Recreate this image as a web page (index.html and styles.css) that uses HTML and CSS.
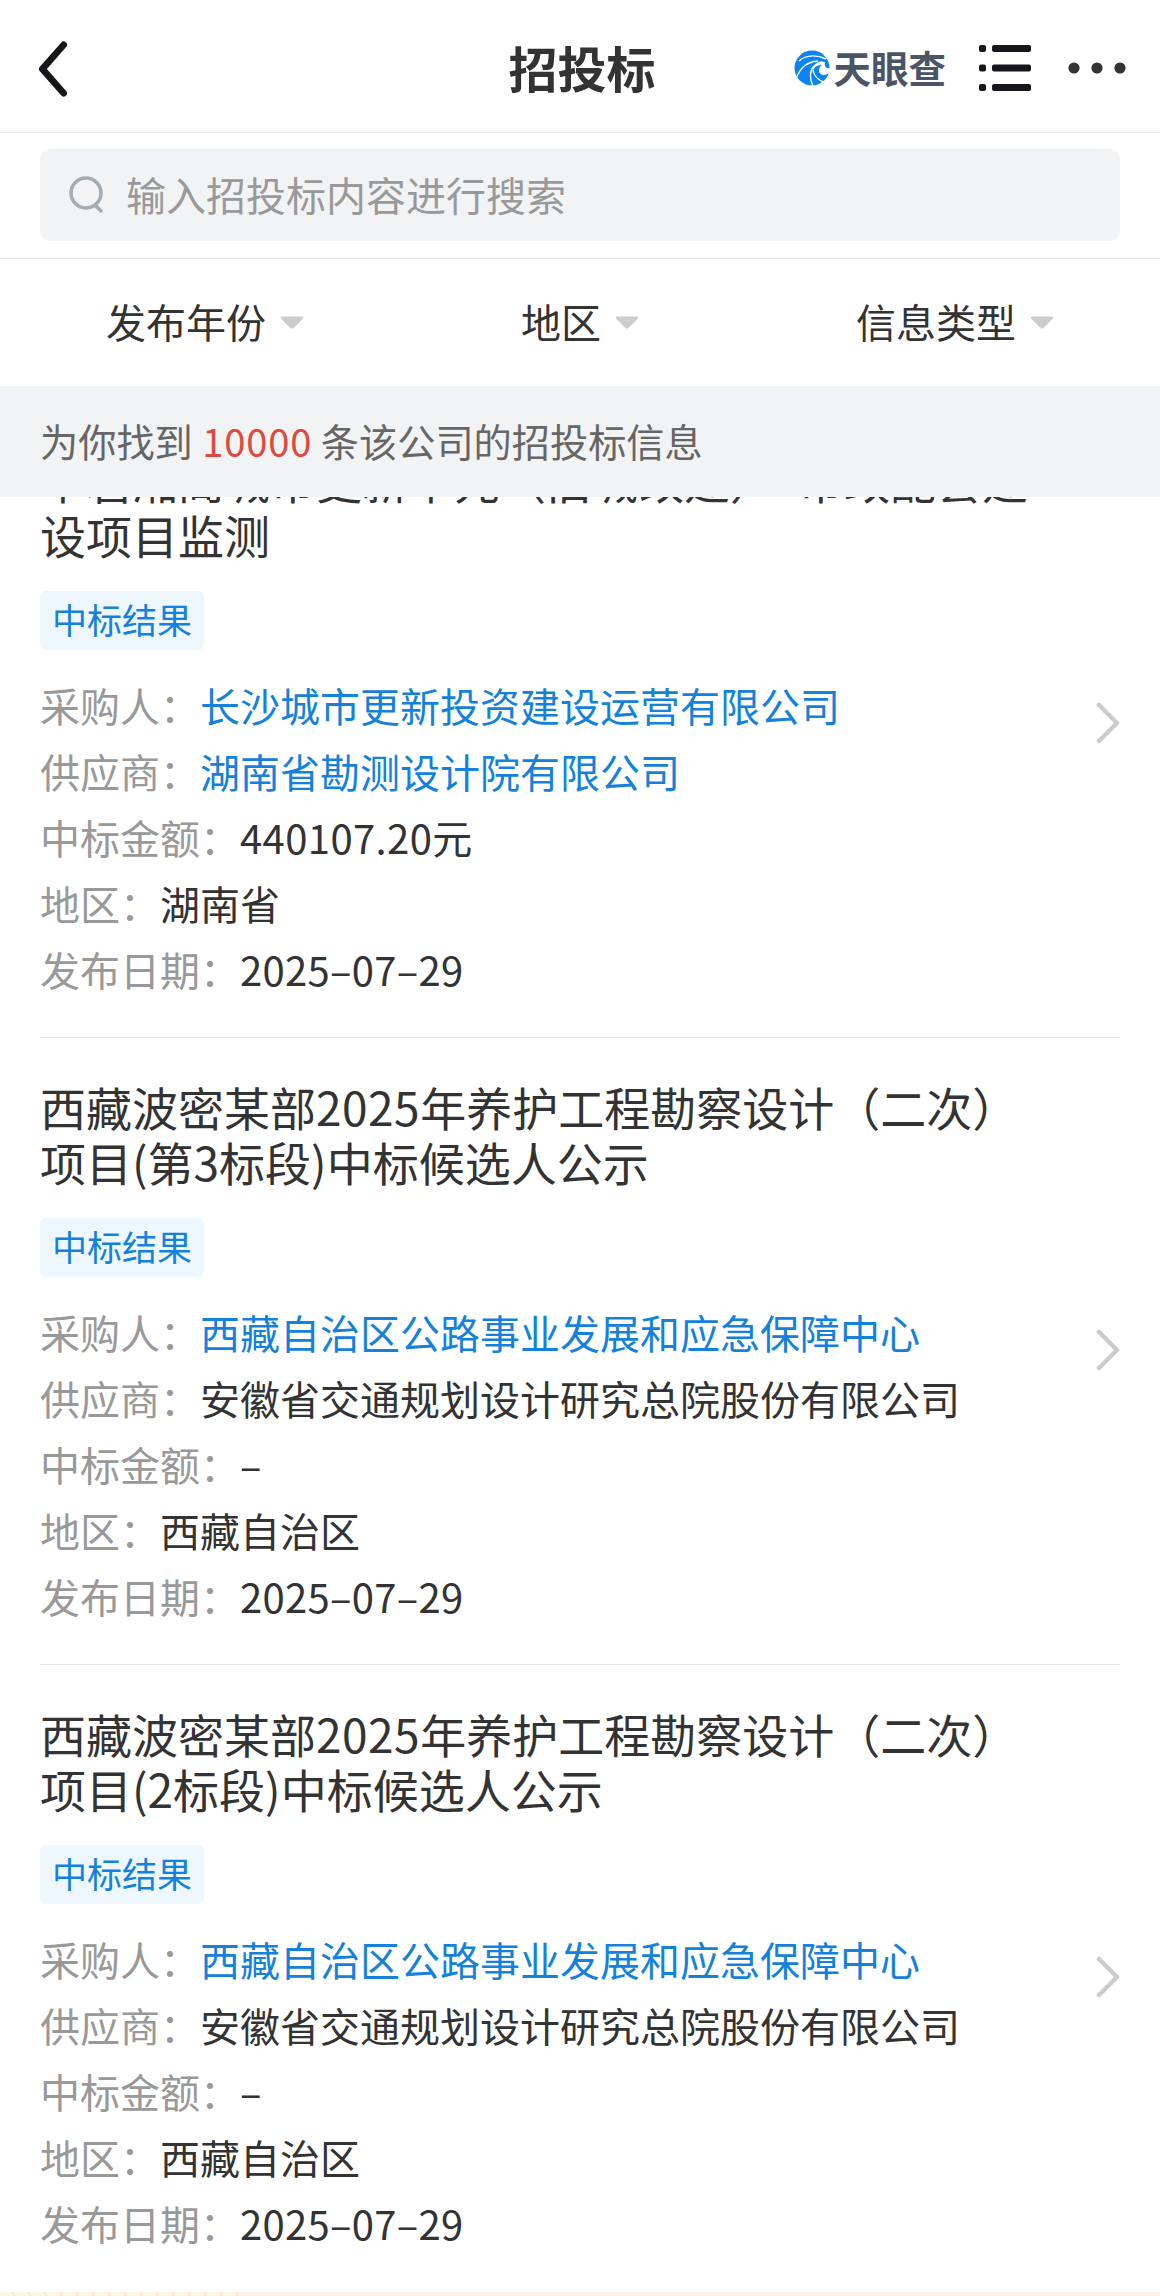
FILE: index.html
```html
<!DOCTYPE html>
<html lang="zh-CN">
<head>
    <meta charset="UTF-8">
    <meta name="viewport" content="width=device-width, initial-scale=1.0">
    <title>招投标</title>
    <link rel="stylesheet" href="styles.css">
</head>
<body>

    <header class="header">
        <svg class="back" viewBox="0 0 30 58"><path d="M26 4 L4 29 L26 54"/></svg>
        <h1>招投标</h1>
        <div class="actions">
            <svg class="logo" viewBox="0 0 36 36">
                <circle cx="18" cy="18" r="17.5" fill="#0a84f5"/>
                <path d="M19 21 C18 14 25 10 31 12 C30 16 32 19 36 18 L36 22 C31 27 25 25 25 21 C25 18 26 16 28 15 C23 15 20 17 19 21 Z" fill="#fff"/>
                <path d="M5 11 C13 4 24 5 32 9 M2 29 C6 18 12 12 24 11 M19 36 C15 28 16 20 20 16 M30 32 C24 30 20 26 19 20" fill="none" stroke="#fff" stroke-width="1.4"/>
            </svg>
            <span class="brand">天眼查</span>
            <svg class="menu" viewBox="0 0 52 46">
                <rect x="0" y="0" width="7" height="7" rx="2"/><rect x="13" y="0" width="39" height="7" rx="2"/>
                <rect x="0" y="19.5" width="7" height="7" rx="2"/><rect x="13" y="19.5" width="39" height="7" rx="2"/>
                <rect x="0" y="39" width="7" height="7" rx="2"/><rect x="13" y="39" width="39" height="7" rx="2"/>
            </svg>
            <svg class="more" viewBox="0 0 58 12"><circle cx="6" cy="6" r="5.6"/><circle cx="29" cy="6" r="5.6"/><circle cx="52" cy="6" r="5.6"/></svg>
        </div>
    </header>

    <div class="search">
        <div class="search-box">
            <svg class="search-icon" viewBox="0 0 36 40"><circle cx="17" cy="18" r="15"/><path d="M26 30 L32 36"/></svg>
            <span class="placeholder">输入招投标内容进行搜索</span>
        </div>
    </div>

    <nav class="filters">
        <div class="filter"><span>发布年份</span><svg class="arrow" viewBox="0 0 24 14"><path d="M3 1 H21 Q25 1 22 4 L14 12 Q12 14 10 12 L2 4 Q-1 1 3 1 Z"/></svg></div>
        <div class="filter"><span>地区</span><svg class="arrow" viewBox="0 0 24 14"><path d="M3 1 H21 Q25 1 22 4 L14 12 Q12 14 10 12 L2 4 Q-1 1 3 1 Z"/></svg></div>
        <div class="filter"><span>信息类型</span><svg class="arrow" viewBox="0 0 24 14"><path d="M3 1 H21 Q25 1 22 4 L14 12 Q12 14 10 12 L2 4 Q-1 1 3 1 Z"/></svg></div>
    </nav>

    <div class="count">为你找到 <span class="num">10000</span> 条该公司的招投标信息</div>

    <main class="list">
        <div class="item">
            <div class="info">
                <h2>单岩湘阁城市更新单元（旧城改建）<span class="dash">-</span>市政配套建<br>设项目监测</h2>
                <span class="tag">中标结果</span>
                <p><span class="label">采购人：</span><a>长沙城市更新投资建设运营有限公司</a></p>
                <p><span class="label">供应商：</span><a>湖南省勘测设计院有限公司</a></p>
                <p><span class="label">中标金额：</span><span class="amount">440107.20</span>元</p>
                <p><span class="label">地区：</span>湖南省</p>
                <p><span class="label">发布日期：</span><span class="date">2025–07–29</span></p>
            </div>
            <svg class="chevron" viewBox="0 0 24 42"><path d="M3 3 L21 21 L3 39"/></svg>
        </div>
        <div class="item">
            <div class="info">
                <h2>西藏波密某部<span class="year">2025</span>年养护工程勘察设计（二次）<br>项目(第3标段)中标候选人公示</h2>
                <span class="tag">中标结果</span>
                <p><span class="label">采购人：</span><a>西藏自治区公路事业发展和应急保障中心</a></p>
                <p><span class="label">供应商：</span>安徽省交通规划设计研究总院股份有限公司</p>
                <p><span class="label">中标金额：</span><span class="date">–</span></p>
                <p><span class="label">地区：</span>西藏自治区</p>
                <p><span class="label">发布日期：</span><span class="date">2025–07–29</span></p>
            </div>
            <svg class="chevron" viewBox="0 0 24 42"><path d="M3 3 L21 21 L3 39"/></svg>
        </div>
        <div class="item">
            <div class="info">
                <h2>西藏波密某部<span class="year">2025</span>年养护工程勘察设计（二次）<br>项目(2标段)中标候选人公示</h2>
                <span class="tag">中标结果</span>
                <p><span class="label">采购人：</span><a>西藏自治区公路事业发展和应急保障中心</a></p>
                <p><span class="label">供应商：</span>安徽省交通规划设计研究总院股份有限公司</p>
                <p><span class="label">中标金额：</span><span class="date">–</span></p>
                <p><span class="label">地区：</span>西藏自治区</p>
                <p><span class="label">发布日期：</span><span class="date">2025–07–29</span></p>
            </div>
            <svg class="chevron" viewBox="0 0 24 42"><path d="M3 3 L21 21 L3 39"/></svg>
        </div>
    </main>

    <div class="banner"></div>

</body>
</html>
```
FILE: styles.css
```css
* {
    box-sizing: border-box;
}
body {
    margin: 0;
    height: 2296px;
    overflow: hidden;
    display: flex;
    flex-direction: column;
    font-family: "Noto Sans CJK SC", sans-serif;
    font-size: 40px;
    color: #333;
    background-color: #fff;
}
h1, h2, p {
    margin: 0;
}
svg {
    display: block;
    flex: none;
}
.header {
    height: 133px;
    flex: none;
    display: grid;
    grid-template-columns: 1fr auto 1fr;
    align-items: center;
    padding: 4px 34px 0 38px;
    border-bottom: 1px solid #ebebeb;
}
.header h1 {
    padding-bottom: 3px;
    font-size: 49px;
    line-height: 60px;
    font-weight: 600;
}
.back {
    width: 30px;
    height: 56px;
    margin-top: 2px;
    fill: none;
    stroke: #16171b;
    stroke-width: 7;
    stroke-linecap: round;
    stroke-linejoin: round;
}
.actions {
    display: flex;
    align-items: center;
    justify-content: flex-end;
}
.logo {
    width: 36px;
    height: 36px;
    margin-right: 4px;
}
.brand {
    padding-bottom: 3px;
    font-size: 37.5px;
    line-height: 40px;
    font-weight: 700;
    color: #4b5568;
}
.menu {
    width: 52px;
    height: 46px;
    margin: 0 37px 0 33px;
    fill: #16171b;
}
.more {
    width: 58px;
    height: 12px;
    fill: #333;
}
.search {
    flex: none;
    height: 126px;
    padding: 16px 40px;
    border-bottom: 1px solid #e0e0e0;
}
.search-box {
    height: 92px;
    display: flex;
    align-items: center;
    padding-left: 29px;
    border-radius: 10px;
    background-color: #f1f3f5;
    color: #999;
    line-height: 60px;
}
.placeholder {
    padding-bottom: 3px;
}
.search-icon {
    width: 36px;
    height: 40px;
    margin-right: 21px;
    fill: none;
    stroke: #a3abb3;
    stroke-width: 3.5;
    stroke-linecap: round;
}
.filters {
    flex: none;
    height: 127px;
    display: flex;
    justify-content: space-between;
    align-items: center;
    padding: 0 106px;
    line-height: 60px;
}
.filter {
    display: flex;
    align-items: center;
}
.filter span {
    padding-bottom: 4px;
}
.arrow {
    width: 24px;
    height: 15px;
    margin-left: 14px;
    fill: #ccc;
}
.count {
    flex: none;
    height: 111px;
    padding-left: 40px;
    font-size: 38.2px;
    line-height: 110px;
    color: #666;
    background-color: #f1f3f5;
}
.num {
    margin-left: 1px;
    color: #dd4a40;
    letter-spacing: 0.8px;
}
.list {
    flex: none;
    height: 1795px;
    overflow: hidden;
    padding: 0 40px;
}
.item {
    height: 627px;
    display: flex;
    align-items: flex-start;
    justify-content: space-between;
    padding-top: 41px;
    border-bottom: 1px solid #e3e3e3;
}
/* the list is scrolled, the first title is half under the count bar */
.item:first-child {
    margin-top: -86px;
}
.item:last-child {
    border-bottom: none;
}
.item h2 {
    font-size: 46px;
    font-weight: 400;
    line-height: 55px;
    white-space: nowrap;
}
.dash {
    margin: 0 5px 0 1px;
}
.year {
    letter-spacing: 0.5px;
}
.tag {
    display: block;
    width: 164px;
    height: 59px;
    margin: 29px 0 22px;
    border-radius: 6px;
    font-size: 35px;
    line-height: 56px;
    text-align: center;
    color: #1482dc;
    background-color: #eef7fe;
}
.item p {
    line-height: 66px;
    white-space: nowrap;
}
.item a {
    color: #1482dc;
}
.label {
    color: #999;
}
.amount {
    letter-spacing: 0.4px;
}
.date {
    letter-spacing: 0.3px;
}
.chevron {
    width: 24px;
    height: 42px;
    margin-top: 250px;
    fill: none;
    stroke: #ccc;
    stroke-width: 4.5;
    stroke-linecap: round;
    stroke-linejoin: round;
}
.banner {
    flex: 1;
    background: repeating-linear-gradient(70deg, #fff6e6 0 12px, #faebd7 12px 15px) left / 240px 100% no-repeat, #fff4e4;
}
```
